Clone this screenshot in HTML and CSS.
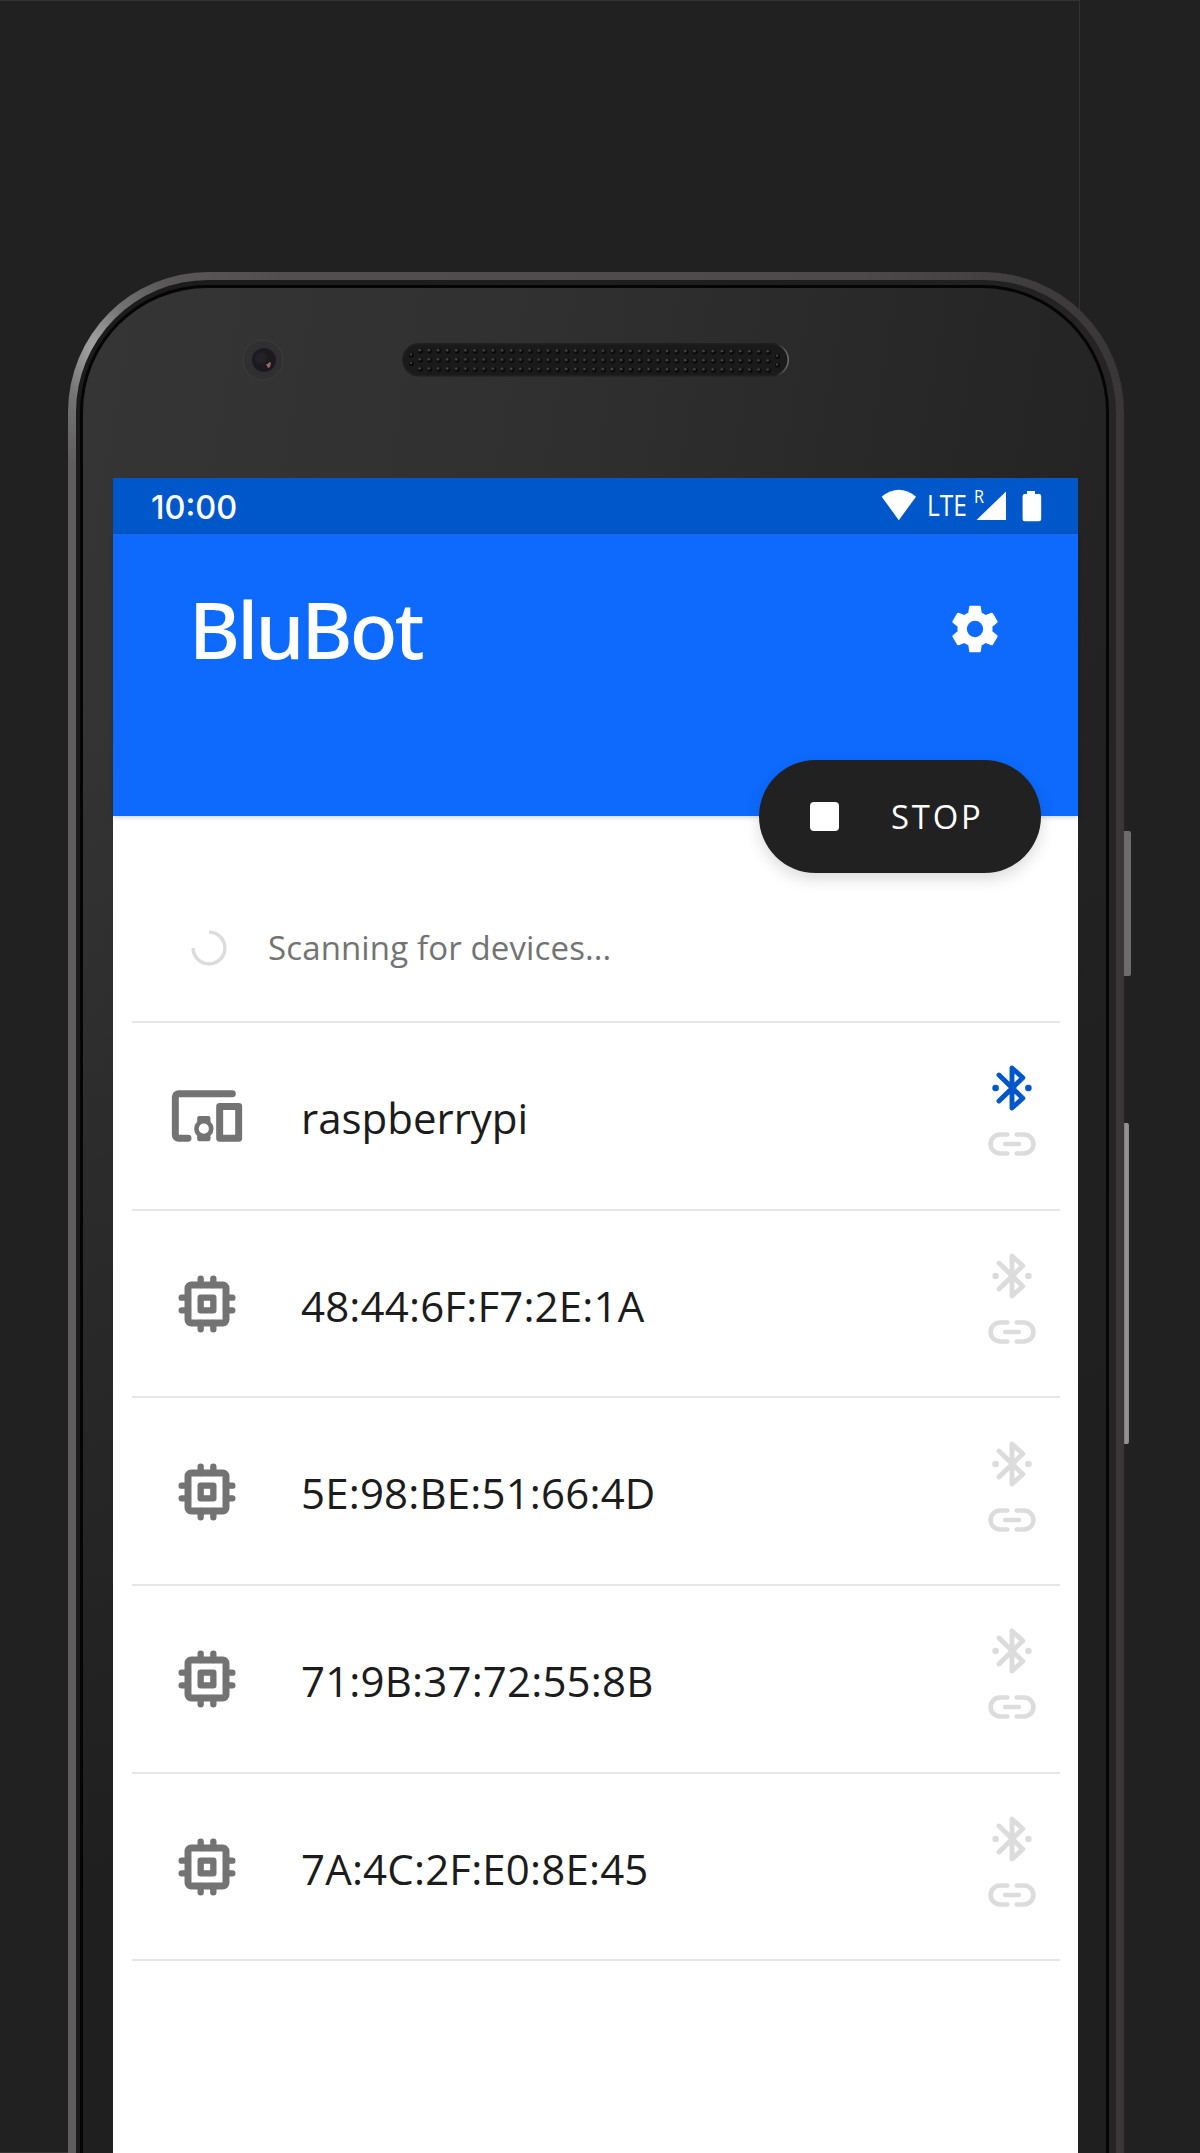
FILE: index.html
```html
<!DOCTYPE html>
<html lang="en">
<head>
<meta charset="utf-8">
<title>BluBot</title>
<link rel="stylesheet" href="styles.css">
</head>
<body>
<svg width="0" height="0" class="defs" aria-hidden="true">
  <symbol id="chip" viewBox="0 0 24 24">
    <g fill="none" stroke="currentColor" stroke-width="2" stroke-linecap="round" stroke-linejoin="round">
      <rect x="6" y="6" width="12" height="12" rx="1" stroke-width="2.2"/>
      <rect x="10" y="10" width="4" height="4"/>
      <path d="M10 6V4M14 6V4M10 18v2M14 18v2M6 10H4M6 14H4M18 10h2M18 14h2"/>
    </g>
  </symbol>
  <symbol id="devices" viewBox="0 0 24 24">
    <path d="M20 5H3a1 1 0 0 0-1 1v12a1 1 0 0 0 1 1h3" fill="none" stroke="currentColor" stroke-width="2.2" stroke-linecap="round"/>
    <rect x="16" y="9" width="6" height="10" fill="none" stroke="currentColor" stroke-width="2.2" stroke-linejoin="round"/>
    <path fill="currentColor" fill-rule="evenodd" d="M9.6 12h2.8a.7.7 0 0 1 .7.7v1.1a3 3 0 0 1 0 4.4v1.1a.7.7 0 0 1-.7.7H9.6a.7.7 0 0 1-.7-.7v-1.1a3 3 0 0 1 0-4.4v-1.1a.7.7 0 0 1 .7-.7zM11 14.4a1.6 1.6 0 1 0 0 3.2 1.6 1.6 0 0 0 0-3.2z"/>
  </symbol>
  <symbol id="bluetooth" viewBox="-28 -28 56 56">
    <path d="M-13-13 10.8 10.2 0 20V-20L10.8-10.2-13 13" fill="none" stroke="currentColor" stroke-width="4.9" stroke-linecap="round" stroke-linejoin="round"/>
    <circle cx="-16.4" r="3.3" fill="currentColor"/>
    <circle cx="16.4" r="3.3" fill="currentColor"/>
  </symbol>
  <symbol id="link" viewBox="-28 -28 56 56">
    <path d="M-4.7-9.5H-11.9a9.5 9.5 0 0 0 0 19H-4.7M4.7-9.5H11.9a9.5 9.5 0 0 1 0 19H4.7M-6.8 0H6.8" fill="none" stroke="currentColor" stroke-width="4.6" stroke-linecap="round"/>
  </symbol>
</svg>
<div class="stage">
  <div class="backdrop"></div>
  <div class="power"></div>
  <div class="volume"></div>
  <div class="rim"><div class="gasket"><div class="face">
    <div class="bezel">
      <svg class="camera" viewBox="0 0 42 42">
        <circle cx="21" cy="21" r="20" fill="#303031" stroke="#3d3d3d"/>
        <circle cx="22" cy="21" r="12" fill="#1c1a1f"/>
        <circle cx="19" cy="19" r="6" fill="#24202a"/>
        <path d="M24 25h2l1-2 2 1-1 4-2 1z" fill="#9c6865"/>
      </svg>
      <svg class="speaker" viewBox="0 0 387 34">
        <defs>
          <pattern id="holes" width="9.16" height="9.15" patternUnits="userSpaceOnUse" patternTransform="translate(13.9 3.4) rotate(.18)">
            <circle cx="4.6" cy="4.6" r="2.4" fill="#070707"/>
            <circle cx="3.8" cy="3.8" r="1.3" fill="#484848"/>
          </pattern>
          <linearGradient id="lip"><stop offset="0" stop-color="#202020"/><stop offset=".97" stop-color="#202020"/><stop offset="1" stop-color="#707070"/></linearGradient>
        </defs>
        <rect x=".8" y=".8" width="385.4" height="32" rx="16" fill="#1a1a1a" stroke="url(#lip)" stroke-width="1.5"/>
        <path d="M14.2 3.2h357.2v27.6H14.2z" fill="url(#holes)"/>
        <g fill="#070707"><circle cx="9.5" cy="12.2" r="2.4"/><circle cx="9.5" cy="20.8" r="2.4"/><circle cx="375.5" cy="13.5" r="2.4"/><circle cx="375.5" cy="22.2" r="2.4"/></g>
        <g fill="#404040"><circle cx="9" cy="11.5" r="1.2"/><circle cx="9" cy="20" r="1.2"/><circle cx="375" cy="12.8" r="1.2"/><circle cx="375" cy="21.5" r="1.2"/></g>
      </svg>
    </div>
    <main class="screen">
      <div class="status">
        <span class="clock">10:00</span>
        <svg class="indicators" viewBox="0 0 162 56" fill="#fff">
          <path d="M.7 18.7Q17.8 5 35 18.7L17.8 42.2z"/>
          <text x="46" y="38" font-size="28.5" textLength="40" lengthAdjust="spacingAndGlyphs">LTE</text>
          <text x="93" y="25" font-size="17.5" textLength="10" lengthAdjust="spacingAndGlyphs">R</text>
          <path d="M95.5 42 125 13.5V42z"/>
          <path d="M146 13h8v3h4a2.2 2.2 0 0 1 2.2 2.2V41a2.2 2.2 0 0 1-2.2 2.2h-14A2.2 2.2 0 0 1 141.6 41V18.2A2.2 2.2 0 0 1 143.8 16h2.2z"/>
        </svg>
      </div>
      <header class="appbar">
        <h1>BluBot</h1>
        <svg class="settings" viewBox="0 0 24 24" fill="#fff"><path d="M19.43 12.98c.04-.32.07-.64.07-.98s-.03-.66-.07-.98l2.11-1.65c.19-.15.24-.42.12-.64l-2-3.46c-.12-.22-.39-.3-.61-.22l-2.49 1c-.52-.4-1.08-.73-1.69-.98l-.38-2.65C14.46 2.18 14.25 2 14 2h-4c-.25 0-.46.18-.49.42l-.38 2.65c-.61.25-1.17.59-1.69.98l-2.49-1c-.23-.09-.49 0-.61.22l-2 3.46c-.13.22-.07.49.12.64l2.11 1.65c-.04.32-.07.65-.07.98s.03.66.07.98l-2.11 1.65c-.19.15-.24.42-.12.64l2 3.46c.12.22.39.3.61.22l2.49-1c.52.4 1.08.73 1.69.98l.38 2.65c.03.24.24.42.49.42h4c.25 0 .46-.18.49-.42l.38-2.65c.61-.25 1.17-.59 1.69-.98l2.49 1c.23.09.49 0 .61-.22l2-3.46c.12-.22.07-.49-.12-.64zM12 15.5a3.5 3.5 0 1 1 0-7 3.5 3.5 0 0 1 0 7z"/></svg>
        <button class="stop"><i class="square"></i><span>STOP</span></button>
      </header>
      <section class="scanning">
        <svg class="spinner" viewBox="0 0 36 36"><path d="M18 2.1A15.9 15.9 0 1 1 2.1 18" fill="none" stroke="#dcdcdc" stroke-width="3.4"/></svg>
        <span>Scanning for devices...</span>
      </section>
      <ul class="list">
        <li><svg class="kind"><use href="#devices"/></svg><span class="name">raspberrypi</span><span class="state"><svg class="on"><use href="#bluetooth"/></svg><svg><use href="#link"/></svg></span></li>
        <li><svg class="kind"><use href="#chip"/></svg><span class="name address">48:44:6F:F7:2E:1A</span><span class="state"><svg><use href="#bluetooth"/></svg><svg><use href="#link"/></svg></span></li>
        <li><svg class="kind"><use href="#chip"/></svg><span class="name address">5E:98:BE:51:66:4D</span><span class="state"><svg><use href="#bluetooth"/></svg><svg><use href="#link"/></svg></span></li>
        <li><svg class="kind"><use href="#chip"/></svg><span class="name address">71:9B:37:72:55:8B</span><span class="state"><svg><use href="#bluetooth"/></svg><svg><use href="#link"/></svg></span></li>
        <li><svg class="kind"><use href="#chip"/></svg><span class="name address">7A:4C:2F:E0:8E:45</span><span class="state"><svg><use href="#bluetooth"/></svg><svg><use href="#link"/></svg></span></li>
      </ul>
    </main>
  </div></div></div>
</div>
</body>
</html>
```
FILE: styles.css
```css
* { box-sizing: border-box; }
body { margin: 0; background: #212121; font-family: "Open Sans", "Noto Sans", sans-serif; }
.defs { position: absolute; }
svg { display: block; flex: none; }

.stage {
  position: relative;
  width: 1200px;
  height: 2153px;
  padding: 272px 76px 0 68px;
  overflow: hidden;
}
.backdrop {
  position: absolute;
  inset: 0 120px 0 0;
  border: 1px solid #333;
  border-left: 0;
}
.power, .volume { position: absolute; left: 1124px; }
.power { top: 831px; width: 7px; height: 145px; background: #6c6c6c; border-radius: 0 2px 2px 0; }
.volume { top: 1123px; width: 5px; height: 321px; background: linear-gradient(90deg, #777, #999 40%, #888); border-radius: 0 2px 2px 0; }

.rim {
  position: relative;
  height: 1881px;
  padding: 8px 8px 0 8px;
  border-radius: 140px 140px 0 0;
  background:
    radial-gradient(ellipse 85px 120px at 26px 76px, #a5a5a5, rgba(140, 140, 140, .5) 45%, transparent),
    linear-gradient(90deg, #5f5d5e 0, #504e4e 20%, #4b494a 75%, #393637 100%);
}
.gasket {
  height: 100%;
  padding: 5px 7px 0 4px;
  border-radius: 132px 132px 0 0;
  background: linear-gradient(90deg, #1b1b1b, #1f1f1f 80%, #262425);
}
.face {
  height: 100%;
  border: solid #050505;
  border-width: 3px 3px 0 3px;
  border-radius: 127px 127px 0 0;
  padding-left: 30px;
  background:
    linear-gradient(165deg, transparent 20%, #1f1f1f 75%),
    linear-gradient(100deg, #353536 0, #303030 35%, #272727 65%, #222 85%, #1e1e1e 100%);
}
.bezel { display: flex; height: 190px; padding-top: 51px; }
.camera { width: 42px; height: 42px; margin-left: 129px; }
.speaker { width: 387px; height: 34px; margin: 4px 0 0 118px; }

.screen { width: 965px; height: 1675px; background: #fff; }
.status {
  display: flex;
  justify-content: space-between;
  align-items: center;
  height: 56px;
  padding: 0 35px 0 38px;
  background: #0057c9;
  color: #fff;
}
.clock { font: 500 32.5px/56px Inter, sans-serif; padding-top: 3px; }
.indicators { width: 162px; height: 56px; }

.appbar {
  position: relative;
  display: flex;
  justify-content: space-between;
  align-items: flex-start;
  height: 282px;
  padding: 67px 75px 0 75px;
  background: #0d6afd;
  color: #fff;
  box-shadow: 0 1px 5px rgba(0, 0, 0, .2);
}
h1 { margin: 0; font: 500 78px/56px "Noto Sans", sans-serif; letter-spacing: -2.8px; padding-left: 1px; }
.settings { width: 56px; height: 56px; }
.stop {
  position: absolute;
  right: 37px;
  bottom: -57px;
  display: flex;
  align-items: center;
  width: 282px;
  height: 113px;
  padding: 0 0 0 51px;
  gap: 52px;
  border: 0;
  border-radius: 57px;
  background: #212121;
  color: #fff;
  font: 400 32.8px "Open Sans", sans-serif;
  letter-spacing: 2.8px;
  box-shadow: 0 6px 16px rgba(0, 0, 0, .14);
}
.square { width: 29px; height: 29px; border-radius: 4px; background: #fff; }

.scanning {
  display: flex;
  align-items: center;
  height: 205px;
  padding: 58px 0 0 78px;
  gap: 41px;
  color: #737373;
  font-size: 33px;
  letter-spacing: .13px;
}
.spinner { width: 36px; height: 36px; }
.list { list-style: none; margin: 0 18px 0 19px; padding: 0; border-top: 2px solid #e6e6e6; }
.list li {
  display: flex;
  align-items: center;
  height: 187.7px;
  padding: 1px 20px 0 37px;
  border-bottom: 2px solid #e6e6e6;
}
.kind { width: 76px; height: 76px; color: #737373; }
.name { flex: 1; margin: 2px 0 0 56px; font-size: 42px; color: #1c1c1c; }
.address { letter-spacing: .17px; }
.state { color: #dcdcdc; }
.state svg { width: 56px; height: 56px; }
.state .on { color: #0057c9; }
```
